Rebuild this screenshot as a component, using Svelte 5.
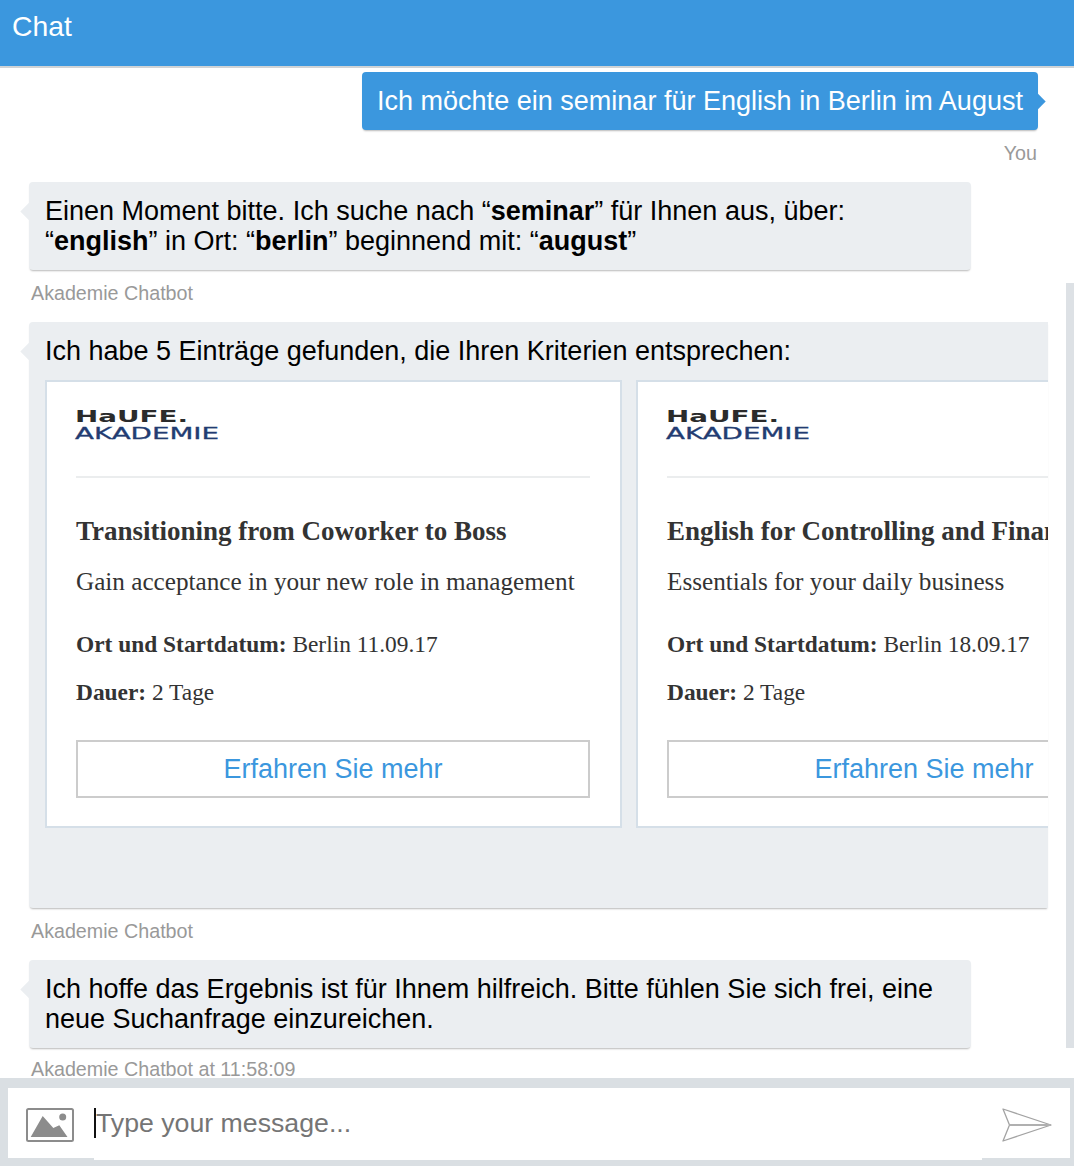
<script>
  const cards = [
    {
      title: "Transitioning from Coworker to Boss",
      subtitle: "Gain acceptance in your new role in management",
      place: "Berlin 11.09.17",
      duration: "2 Tage"
    },
    {
      title: "English for Controlling and Finance",
      subtitle: "Essentials for your daily business",
      place: "Berlin 18.09.17",
      duration: "2 Tage"
    }
  ];
</script>

<div class="chat">
  <header class="title-bar">Chat</header>

  <main class="messages">
    <div class="scroll-thumb"></div>

    <div class="msg user">
      <div class="bubble">Ich möchte ein seminar für English in Berlin im August</div>
      <div class="meta">You</div>
    </div>

    <div class="msg bot">
      <div class="bubble">
        Einen Moment bitte. Ich suche nach “<b>seminar</b>” für Ihnen aus, über:<br />
        “<b>english</b>” in Ort: “<b>berlin</b>” beginnend mit: “<b>august</b>”
      </div>
      <div class="meta">Akademie Chatbot</div>
    </div>

    <div class="msg bot wide">
      <div class="bubble">
        <div class="intro">Ich habe 5 Einträge gefunden, die Ihren Kriterien entsprechen:</div>
        <div class="carousel">
          {#each cards as card}
            <article class="card">
              <svg class="logo" viewBox="0 -6 150 40" width="150" height="40" role="img" aria-label="Haufe Akademie">
                <text x="1" y="12" class="logo-top" textLength="113" lengthAdjust="spacingAndGlyphs">HaUFE.</text>
                <text x="1" y="29" class="logo-bottom" textLength="144" lengthAdjust="spacingAndGlyphs">AKADEMIE</text>
              </svg>
              <hr />
              <h3>{card.title}</h3>
              <p class="subtitle">{card.subtitle}</p>
              <p class="line"><b>Ort und Startdatum:</b> {card.place}</p>
              <p class="line"><b>Dauer:</b> {card.duration}</p>
              <div class="more">Erfahren Sie mehr</div>
            </article>
          {/each}
        </div>
      </div>
      <div class="meta">Akademie Chatbot</div>
    </div>

    <div class="msg bot last">
      <div class="bubble">
        Ich hoffe das Ergebnis ist für Ihnem hilfreich. Bitte fühlen Sie sich frei, eine<br />
        neue Suchanfrage einzureichen.
      </div>
      <div class="meta">Akademie Chatbot at 11:58:09</div>
    </div>
  </main>

  <footer class="composer">
    <div class="input-row">
      <svg class="attach" viewBox="0 0 48 34" width="48" height="34">
        <rect x="1" y="1" width="46" height="32" rx="1.5" fill="none" stroke="#8c8c8c" stroke-width="2" />
        <circle cx="36.700" cy="9" r="3.500" fill="#8c8c8c" />
        <path d="M4.700 29 L16.700 8 L27.300 20 L33.300 17.300 L41.500 29 Z" fill="#8c8c8c" />
      </svg>
      <div class="field"><span class="caret"></span>Type your message...</div>
      <svg class="send" viewBox="0 0 50 34" width="50" height="34">
        <path d="M1 1 L49 17 L1 33 L7.500 17 Z" fill="none" stroke="#a3a3a3" stroke-width="1.300" stroke-linejoin="round" />
        <path d="M7.500 17 H49" fill="none" stroke="#b0b0b0" stroke-width="2" />
      </svg>
    </div>
  </footer>
</div>

<style>
  :global(body) {
    margin: 0;
    background: #fff;
  }
  .chat {
    display: flex;
    flex-direction: column;
    height: 1166px;
    overflow: hidden;
    font-family: "Liberation Sans", Arial, sans-serif;
    color: #000;
  }
  .title-bar {
    flex: none;
    box-sizing: border-box;
    height: 68px;
    padding: 10px 12px 0;
    background: #3b97de;
    border-bottom: 2px solid #cfd3d6;
    color: #fff;
    font-size: 28.300px;
    line-height: 32px;
  }
  .messages {
    position: relative;
    flex: 1;
    min-height: 0;
    overflow: hidden;
    padding: 4px 26px 0 29px;
  }
  .scroll-thumb {
    position: absolute;
    top: 215px;
    right: 0;
    width: 8px;
    height: 765px;
    background: #dde1e5;
  }
  .msg {
    display: flex;
    flex-direction: column;
    margin-bottom: 17px;
  }
  .bubble {
    position: relative;
    box-sizing: border-box;
    border-radius: 4px;
    padding: 14px 16px;
    font-size: 27px;
    line-height: 30px;
    box-shadow: 0 2px 2px -1px rgba(0, 0, 0, 0.28);
  }
  .bubble::before {
    content: "";
    position: absolute;
    top: 23px;
    width: 13px;
    height: 13px;
    transform: rotate(45deg);
    background: inherit;
  }
  .meta {
    font-size: 19.700px;
    line-height: 24px;
    color: #999;
  }
  .user {
    align-items: flex-end;
    margin-right: 10px;
  }
  .user .bubble {
    padding: 14px 15px;
    background: #3b97de;
    color: #fff;
    font-size: 27.040px;
    white-space: nowrap;
  }
  .user .bubble::before {
    right: -5px;
  }
  .user .meta {
    margin: 11px 1px 0 0;
  }
  .bot {
    align-items: flex-start;
  }
  .bot .bubble {
    width: 942px;
    background: #ebeef1;
  }
  .bot .bubble::before {
    left: -6px;
  }
  .bot .meta {
    margin: 11px 0 0 2px;
  }
  .last {
    margin-bottom: 0;
  }
  .last .meta {
    line-height: 20px;
  }
  .wide .bubble {
    width: 1019px;
    height: 586px;
    padding: 14px 0 0 16px;
    border-radius: 4px 0 0 4px;
  }
  .intro {
    margin-bottom: 14px;
  }
  .carousel {
    display: flex;
    gap: 14px;
    overflow: hidden;
  }
  .card {
    flex: none;
    box-sizing: border-box;
    width: 577px;
    height: 448px;
    padding: 22px 30px 0 29px;
    background: #fff;
    border: 2px solid #d5dfe8;
    font-family: "Liberation Serif", "Times New Roman", serif;
    color: #333;
  }
  .logo {
    display: block;
    margin: 0 0 32px -2px;
  }
  .logo-top,
  .logo-bottom {
    font-family: "DejaVu Sans", sans-serif;
    font-size: 16.500px;
    font-weight: 700;
  }
  .logo-top {
    fill: #2b2b2b;
  }
  .logo-bottom {
    fill: #223c72;
    stroke: #223c72;
    stroke-width: 0.300;
    font-weight: 400;
  }
  hr {
    height: 2px;
    margin: 0;
    border: 0;
    background: #ebedee;
  }
  h3 {
    margin: 37px 0 0;
    font-size: 27px;
    line-height: 32px;
    font-weight: 700;
    white-space: nowrap;
  }
  .subtitle {
    margin: 19px 0 0;
    font-size: 25.200px;
    line-height: 32px;
    white-space: nowrap;
  }
  .line {
    margin: 0;
    font-size: 23.400px;
    line-height: 32px;
    white-space: nowrap;
  }
  .subtitle + .line {
    margin-top: 30px;
  }
  .line + .line {
    margin-top: 16px;
  }
  .more {
    box-sizing: border-box;
    height: 58px;
    margin-top: 32px;
    border: 2px solid #ccc;
    color: #3b97de;
    font-family: "Liberation Sans", Arial, sans-serif;
    font-size: 27px;
    line-height: 54px;
    text-align: center;
    white-space: nowrap;
  }
  .composer {
    flex: none;
    height: 88px;
    padding: 10px 4px 0 8px;
    box-sizing: border-box;
    background: #dadfe3;
  }
  .input-row {
    position: relative;
    display: flex;
    align-items: center;
    height: 70px;
    padding: 0 18px;
    background: #fff;
  }
  .input-row::after {
    content: "";
    position: absolute;
    left: 86px;
    right: 88px;
    bottom: -2px;
    height: 2px;
    background: #fff;
  }
  .attach {
    flex: none;
    margin: 4px 20px 0 0;
  }
  .field {
    position: relative;
    flex: 1;
    padding-left: 2px;
    color: #757575;
    font-size: 26.700px;
    line-height: 32px;
  }
  .caret {
    position: absolute;
    left: 0;
    top: 1px;
    width: 2px;
    height: 30px;
    background: #111;
  }
  .send {
    flex: none;
    margin-top: 4px;
  }
</style>
